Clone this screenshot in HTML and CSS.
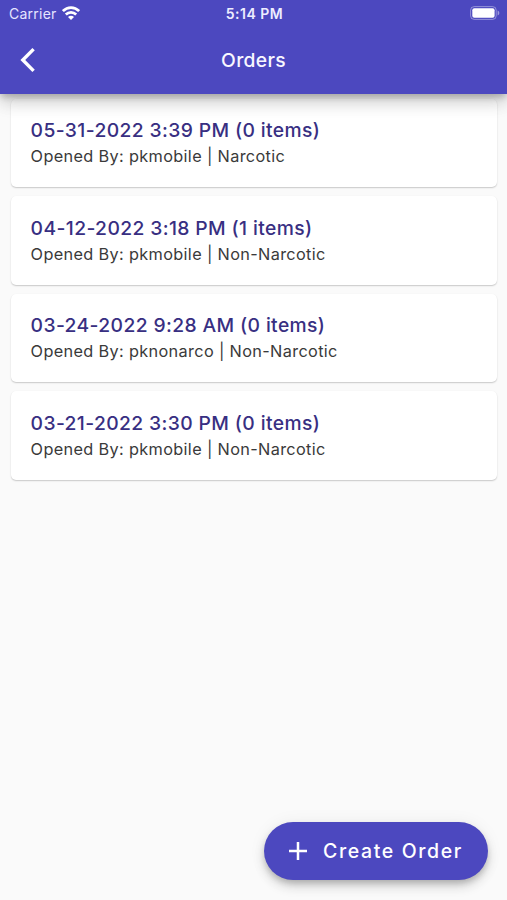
FILE: index.html
```html
<!DOCTYPE html>
<html lang="en">
<head>
<meta charset="utf-8">
<title>Orders</title>
<link rel="stylesheet" href="styles.css">
</head>
<body>
<div class="screen">
  <header class="header">
    <div class="status">
      <div class="carrier"><span>Carrier</span>
        <svg class="wifi" width="18" height="14" viewBox="0 0 18 14" fill="none" stroke="#fff" stroke-width="2.7"><path d="M.9 5.1C5.6.4 12.4.4 17.1 5.1M3.8 8.5c3-2.9 7.4-2.9 10.4 0"/><path d="M9 13.9 6 10.9c1.7-1.5 4.3-1.5 6 0z" fill="#fff" stroke="none"/></svg>
      </div>
      <time class="clock">5:14 PM</time>
      <svg class="battery" width="30" height="14" viewBox="0 0 30 14"><rect x=".6" y=".6" width="25.6" height="12.8" rx="3.6" fill="none" stroke="#fff" stroke-opacity=".4"/><rect x="2.3" y="2.3" width="22.3" height="9.4" rx="2" fill="#fff"/><path d="M27.6 4.5c2.3 1 2.3 4 0 5z" fill="#fff" fill-opacity=".45"/></svg>
    </div>
    <div class="toolbar">
      <svg class="back" width="16" height="26" viewBox="0 0 16 26" fill="none" stroke="#fff" stroke-width="3.4"><path d="M13.6 2.1 2.8 13l10.8 10.9"/></svg>
      <h1 class="heading">Orders</h1>
    </div>
  </header>
  <main class="orders">
    <article class="card"><h2 class="title">05-31-2022 3:39 PM (0 items)</h2><p class="detail">Opened By: pkmobile | Narcotic</p></article>
    <article class="card"><h2 class="title">04-12-2022 3:18 PM (1 items)</h2><p class="detail">Opened By: pkmobile | Non-Narcotic</p></article>
    <article class="card"><h2 class="title">03-24-2022 9:28 AM (0 items)</h2><p class="detail">Opened By: pknonarco | Non-Narcotic</p></article>
    <article class="card"><h2 class="title">03-21-2022 3:30 PM (0 items)</h2><p class="detail">Opened By: pkmobile | Non-Narcotic</p></article>
  </main>
  <button class="create"><svg width="20" height="20" viewBox="0 0 20 20" stroke="#fff" stroke-width="2.5"><path d="M10 1v18M1 10h18"/></svg><span>Create Order</span></button>
</div>
</body>
</html>
```
FILE: styles.css
```css
* { box-sizing: border-box; }
body { margin: 0; background: #fafafa; font-family: Inter, "Liberation Sans", sans-serif; }
h1, h2, p { margin: 0; }
.screen { position: relative; height: 900px; overflow: hidden; }
.header {
  position: relative;
  z-index: 1;
  height: 93.5px;
  color: #fff;
  background: #4c48bf;
  box-shadow: 0 4px 6px -1px rgba(0,0,0,.18), 0 8px 16px rgba(0,0,0,.16), 0 2px 22px rgba(0,0,0,.1);
}
.status {
  display: grid;
  grid-template-columns: 1fr auto 1fr;
  align-items: center;
  height: 25px;
  padding: 2px 7px 0 9px;
}
.carrier { display: flex; align-items: center; gap: 5px; font-size: 14px; letter-spacing: .25px; color: #e6e5ff; }
.wifi { margin-top: -2px; }
.clock { font-size: 14px; font-weight: 600; letter-spacing: .5px; color: #eeedff; }
.battery { justify-self: end; margin-top: -1px; }
.toolbar {
  display: grid;
  grid-template-columns: 1fr auto 1fr;
  align-items: center;
  height: 69.5px;
  padding: 0 20px;
}
.heading { font-size: 19.3px; font-weight: 500; letter-spacing: .3px; color: #f8f7ff; }
.orders { display: grid; gap: 8.9px; padding: 5px 9.8px 0 10.6px; }
.card {
  height: 88.7px;
  padding: 19.8px 20px 0;
  background: #fff;
  border-radius: 5px;
  box-shadow: 0 1px 1.5px rgba(0,0,0,.2), 0 0 1px rgba(0,0,0,.04);
}
.title { font-size: 19.3px; line-height: 24px; font-weight: 500; letter-spacing: .38px; color: #382f82; white-space: nowrap; }
.detail { margin-top: 2px; font-size: 16.3px; line-height: 24px; letter-spacing: .34px; color: #3a3a3a; white-space: nowrap; }
.create {
  position: absolute;
  right: 19.5px;
  bottom: 20px;
  display: flex;
  align-items: center;
  gap: 15.5px;
  width: 224px;
  height: 58px;
  padding: 0 0 0 24px;
  border: 0;
  border-radius: 29px;
  color: #fff;
  background: #4c48bf;
  font: 500 19.5px Inter, "Liberation Sans", sans-serif;
  letter-spacing: 1.62px;
  white-space: nowrap;
  box-shadow: 0 4px 6px -1px rgba(0,0,0,.2), 0 7px 12px rgba(0,0,0,.12), 0 1px 18px rgba(0,0,0,.06);
}
```
